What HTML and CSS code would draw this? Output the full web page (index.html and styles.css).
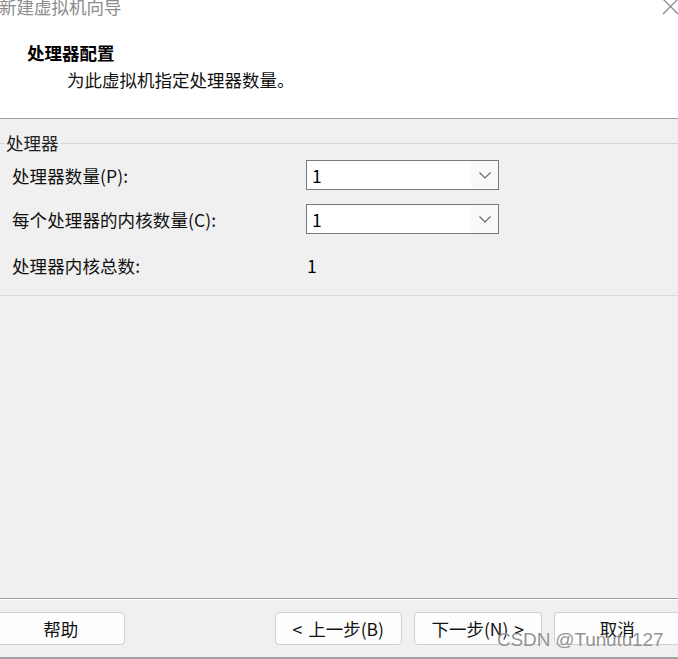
FILE: index.html
```html
<!DOCTYPE html>
<html lang="zh-CN">
<head>
<meta charset="utf-8">
<title>新建虚拟机向导</title>
<link rel="stylesheet" href="styles.css">
</head>
<body>
<div class="window">
  <div class="head">
    <div class="titlebar">
      <span class="title">新建虚拟机向导</span>
      <svg class="close" width="16" height="16" viewBox="0 0 16 16"><path d="M1 -1 L16 14 M1 14 L16 -1" stroke="#8a8a8a" stroke-width="1.3" fill="none"/></svg>
    </div>
    <div class="h1">处理器配置</div>
    <div class="h2">为此虚拟机指定处理器数量。</div>
  </div>
  <div class="body">
    <div class="group">
      <div class="legend"><span class="seg"></span><span class="legend-text">处理器</span><span class="line"></span></div>
      <div class="row first">
        <span class="label">处理器数量(P):</span>
        <div class="combo"><span class="val">1</span><span class="drop"><svg width="12" height="7" viewBox="0 0 12 7"><path d="M0.5 0.5 L6 6 L11.5 0.5" stroke="#666" stroke-width="1.1" fill="none"/></svg></span></div>
      </div>
      <div class="row second">
        <span class="label">每个处理器的内核数量(C):</span>
        <div class="combo"><span class="val">1</span><span class="drop"><svg width="12" height="7" viewBox="0 0 12 7"><path d="M0.5 0.5 L6 6 L11.5 0.5" stroke="#666" stroke-width="1.1" fill="none"/></svg></span></div>
      </div>
      <div class="row third">
        <span class="label">处理器内核总数:</span>
        <span class="total">1</span>
      </div>
    </div>
  </div>
  <div class="footer">
    <button class="btn help">帮助</button>
    <span class="spacer"></span>
    <button class="btn">&lt; 上一步(B)</button>
    <button class="btn">下一步(N) &gt;</button>
    <button class="btn cancel">取消</button>
  </div>
  <div class="watermark">CSDN @Tunutu127</div>
</div>
</body>
</html>
```

FILE: styles.css
```css
html, body {
  margin: 0;
  padding: 0;
}
body {
  width: 678px;
  height: 659px;
  overflow: hidden;
  font-family: "Noto Sans CJK SC", "Noto Sans", sans-serif;
  font-size: 17.5px;
  color: #111;
}
.window {
  position: relative;
  width: 678px;
  height: 659px;
  display: flex;
  flex-direction: column;
  background: #f0f0f0;
}
.head {
  background: #fff;
  height: 118px;
  border-bottom: 1px solid #a0a0a0;
  flex: none;
}
.titlebar {
  display: flex;
  justify-content: space-between;
  height: 16px;
  line-height: 16px;
  overflow: hidden;
}
.title {
  color: #8c8c8c;
  margin-left: -1px;
  margin-top: -1px;
}
.close {
  flex: none;
}
.h1 {
  font-weight: bold;
  margin: 27px 0 0 27px;
  line-height: 20px;
  color: #000;
}
.h2 {
  margin: 7px 0 0 67px;
  line-height: 20px;
  color: #111;
}
.body {
  flex: 1;
  padding-top: 14px;
}
.group {
  border-bottom: 1px solid #dadada;
  padding-bottom: 15px;
}
.legend {
  display: flex;
  align-items: center;
  height: 20px;
  line-height: 20px;
}
.seg {
  width: 5px;
  border-top: 1px solid #d5d5d5;
}
.legend-text {
  padding: 0 2px 0 1px;
  color: #222;
}
.line {
  flex: 1;
  border-top: 1px solid #d5d5d5;
}
.row {
  display: flex;
  align-items: center;
  height: 30px;
  padding-left: 12px;
}
.row.first { margin-top: 7px; }
.row.second { margin-top: 14px; }
.row.third { margin-top: 16px; }
.label {
  width: 294px;
  flex: none;
  color: #111;
  letter-spacing: 0.1px;
}
.combo {
  width: 191px;
  height: 28px;
  border: 1px solid #7a7a7a;
  background: #fff;
  display: flex;
  align-items: center;
}
.val {
  flex: 1;
  padding-left: 5px;
  color: #000;
}
.drop {
  width: 27px;
  height: 28px;
  background: #f9f9f9;
  display: flex;
  align-items: center;
  justify-content: center;
}
.total {
  padding-left: 1px;
  color: #000;
}
.footer {
  flex: none;
  border-top: 1px solid #a0a0a0;
  box-shadow: inset 0 1px 0 #fff;
  border-bottom: 2px solid #a3a3a3;
  padding: 13px 0 12px 0;
  display: flex;
  margin-left: -3px;
  margin-right: -3px;
}
.btn {
  font-family: inherit;
  font-size: 17.5px;
  width: 128px;
  height: 33px;
  background: #fdfdfd;
  border: 1px solid #d0d0d0;
  border-radius: 4px;
  color: #111;
  padding: 0;
  line-height: 30px;
  margin-left: 12px;
  word-spacing: 2px;
}
.btn.help {
  margin-left: 0;
}
.spacer {
  flex: none;
  width: 138px;
}
.watermark {
  position: absolute;
  left: 497px;
  top: 629px;
  font-family: "Liberation Sans", Arial, sans-serif;
  font-size: 19px;
  letter-spacing: -0.15px;
  line-height: 22px;
  color: rgba(110, 110, 110, 0.75);
  text-shadow: 0 0 1px rgba(255,255,255,0.8);
  white-space: nowrap;
}
```
